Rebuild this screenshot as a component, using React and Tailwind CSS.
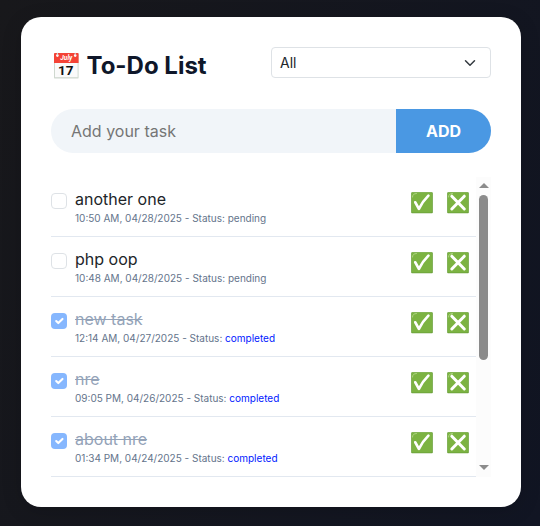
const tasks = [
  { title: 'another one', time: '10:50 AM, 04/28/2025', done: false },
  { title: 'php oop', time: '10:48 AM, 04/28/2025', done: false },
  { title: 'new task', time: '12:14 AM, 04/27/2025', done: true },
  { title: 'nre', time: '09:05 PM, 04/26/2025', done: true },
  { title: 'about nre', time: '01:34 PM, 04/24/2025', done: true },
];

function CalendarIcon() {
  return (
    <svg className="h-[28px] w-[28px] shrink-0" viewBox="0 0 28 28">
      <rect x="2" y="1" width="24.600" height="25.600" rx="1.200" fill="#cfd8cf" />
      <rect x="3" y="10" width="22.600" height="15.200" fill="#fafafa" />
      <path d="M2 2a1 1 0 0 1 1-1h22.600a1 1 0 0 1 1 1V11H2z" fill="#f44336" />
      <circle cx="5.400" cy="3.600" r="1.300" fill="#fff" />
      <circle cx="23.200" cy="3.600" r="1.300" fill="#fff" />
      <path d="M5.400 0.800v2.500M23.200 0.800v2.500" stroke="#cfd8dc" strokeWidth="1" />
      <text x="14.300" y="8.300" textAnchor="middle" fontFamily="Roboto" fontStyle="italic" fontWeight="700" fontSize="6.500" fill="#fff">July</text>
      <text x="13.800" y="23.300" textAnchor="middle" fontFamily="Roboto" fontWeight="700" fontSize="13.500" fill="#111">17</text>
    </svg>
  );
}

function MarkIcon({ cross }) {
  return (
    <svg className="h-[22px] w-[22px]" viewBox="0 0 22 22">
      <rect x="0.200" y="0.200" width="21.600" height="21" rx="0.800" fill="#689f38" />
      <rect x="0.800" y="0.600" width="20.300" height="19.800" rx="0.800" fill="#7cb342" />
      <path d="M1.500 5C1.600 2.700 2.700 1.700 5.500 1.500" fill="none" stroke="#aed581" strokeWidth="1" strokeLinecap="round" />
      {cross ? (
        <path d="M4.800 4.200 17.300 17M17.300 4.200 4.800 17" fill="none" stroke="#fff" strokeWidth="3" strokeLinecap="round" />
      ) : (
        <path d="M4.300 10.300 7.900 16.800Q11.500 9.500 17.400 3.600" fill="none" stroke="#fff" strokeWidth="2.700" strokeLinecap="round" strokeLinejoin="round" />
      )}
    </svg>
  );
}

function Checkbox({ done }) {
  return (
    <span
      className={
        done
          ? 'mt-4 flex h-4 w-4 shrink-0 items-center justify-center rounded-[4px] bg-[#86b7fe]'
          : 'mt-4 h-4 w-4 shrink-0 rounded-[4px] border border-[#dee2e6] bg-white'
      }
    >
      {done && (
        <svg className="h-[14px] w-[14px]" viewBox="0 0 20 20" fill="none">
          <path d="m6 10 3 3 6-6" stroke="#fff" strokeWidth="3" strokeLinecap="round" strokeLinejoin="round" />
        </svg>
      )}
    </span>
  );
}

function Task({ task }) {
  return (
    <li className="flex h-[60px] border-b border-[#e2e8f0]">
      <Checkbox done={task.done} />
      <div className="ml-2 flex-1 pt-[10px]">
        <p className={task.done ? 'text-base leading-6 text-[#94a3b8] line-through' : 'text-base leading-6 text-[#212529]'}>
          {task.title}
        </p>
        <p className="text-[10px] leading-[15px] text-[#64748b]">
          {task.time} - Status: {task.done ? <span className="text-[#0018ff]">completed</span> : 'pending'}
        </p>
      </div>
      <div className="mr-[7px] flex gap-[14px] pt-[15px]">
        <MarkIcon />
        <MarkIcon cross />
      </div>
    </li>
  );
}

export default function App() {
  return (
    <main className="h-[526px] w-[540px] bg-linear-[110deg] from-[#18181b] to-[#111523] px-[21px] pt-[17px] pb-[19px] font-['Inter',sans-serif]">
      <section className="h-[490px] w-[500px] rounded-[20px] bg-white p-[30px] shadow-[0_4px_20px_rgba(0,0,0,0.15)]">
        <header className="flex h-[38px] items-start justify-between">
          <div className="flex h-[38px] items-center">
            <span className="pl-[1px]"><CalendarIcon /></span>
            <h1 className="ml-[6.500px] text-2xl leading-[38px] font-bold text-[#0f172a]">To-Do List</h1>
          </div>
          <div className="flex h-[31px] w-[220px] items-center justify-between rounded-[4px] border border-[#dee2e6] pr-[14px] pl-2 text-sm text-[#212529]">
            All
            <svg className="h-3 w-3" viewBox="0 0 16 16" fill="none">
              <path d="m2 5 6 6 6-6" stroke="#343a40" strokeWidth="2" strokeLinecap="round" strokeLinejoin="round" />
            </svg>
          </div>
        </header>
        <div className="mt-6 flex h-11 overflow-hidden rounded-full bg-[#f1f5f9]">
          <input className="min-w-0 flex-1 pl-5 text-base outline-none placeholder:text-[#757575]" placeholder="Add your task" />
          <button className="w-[95px] bg-[#4a98e3] text-base font-bold text-white">ADD</button>
        </div>
        <div className="mt-6 flex h-[300px]">
          <ul className="flex-1">
            {tasks.map((task) => (
              <Task key={task.title} task={task} />
            ))}
          </ul>
          <div className="flex w-[15px] flex-col items-center bg-[#fcfcfc]">
            <svg className="mt-[6px] h-[5px] w-[10px]" viewBox="0 0 10 5">
              <path d="M0 5 5 0l5 5z" fill="#8b8b8b" />
            </svg>
            <div className="mt-[7px] h-[165px] w-[9px] rounded-full bg-[#8b8b8b]" />
            <svg className="mt-auto mb-[7px] h-[5px] w-[10px]" viewBox="0 0 10 5">
              <path d="M0 0h10L5 5z" fill="#8b8b8b" />
            </svg>
          </div>
        </div>
      </section>
    </main>
  );
}
